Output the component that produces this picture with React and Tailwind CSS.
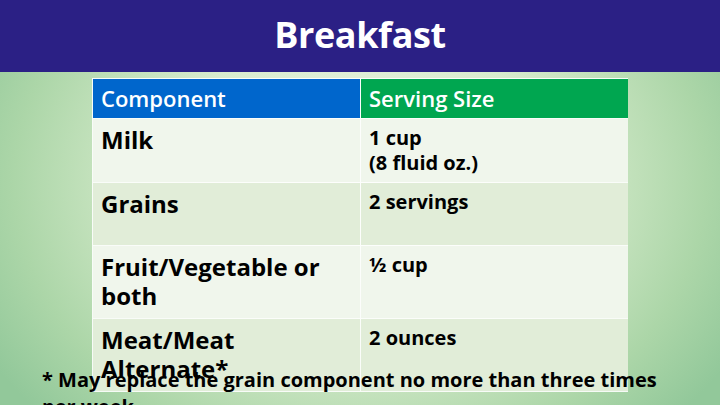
export default function App() {
  const rows = [
    { left: ["Milk"], right: ["1 cup", "(8 fluid oz.)"], bg: "bg-[#f0f6ec]" },
    { left: ["Grains"], right: ["2 servings"], bg: "bg-[#e1edd8]" },
    { left: ["Fruit/Vegetable or", "both"], right: ["½ cup"], bg: "bg-[#f0f6ec]" },
    { left: ["Meat/Meat", "Alternate*"], right: ["2 ounces"], bg: "bg-[#e1edd8]" },
  ];
  return (
    <div className="relative w-[720px] h-[405px] overflow-hidden flex flex-col font-['Open_Sans',sans-serif] bg-[radial-gradient(ellipse_60%_85%_at_50%_45%,#eef6e8_0%,#d8ecce_45%,#acd6a8_80%,#92c89a_100%)]">
      <header className="h-[72px] shrink-0 bg-[#2b2085] flex justify-center">
        <h1 className="text-white font-bold text-[36px] tracking-[-0.4px] leading-[50px] pt-[10px]">Breakfast</h1>
      </header>
      <div className="pt-[6px] pl-[92px]">
        <div className="w-[536px] grid grid-cols-[267px_267px] grid-rows-[39px_63px_62px_72px_72px] gap-px p-px bg-white/90">
          <div className="bg-[#0066cc] flex items-center px-2 text-white font-semibold text-[22px]">Component</div>
          <div className="bg-[#00a650] flex items-center px-2 text-white font-semibold text-[22px]">Serving Size</div>
          {rows.map((r, i) => (
            <>
              <div key={"l" + i} className={`${r.bg} px-2 pt-[6px] text-black font-bold text-[24px] leading-[29px]`}>
                {r.left.map((t) => (
                  <div key={t}>{t}</div>
                ))}
              </div>
              <div key={"r" + i} className={`${r.bg} px-2 pt-[6px] text-black font-bold text-[20px] leading-[25px]`}>
                {r.right.map((t) => (
                  <div key={t}>{t}</div>
                ))}
              </div>
            </>
          ))}
        </div>
      </div>
      <p className="absolute left-[42px] top-[366px] w-[640px] text-black font-bold text-[20px] leading-[27px]">
        * May replace the grain component no more than three times per week
      </p>
    </div>
  );
}
